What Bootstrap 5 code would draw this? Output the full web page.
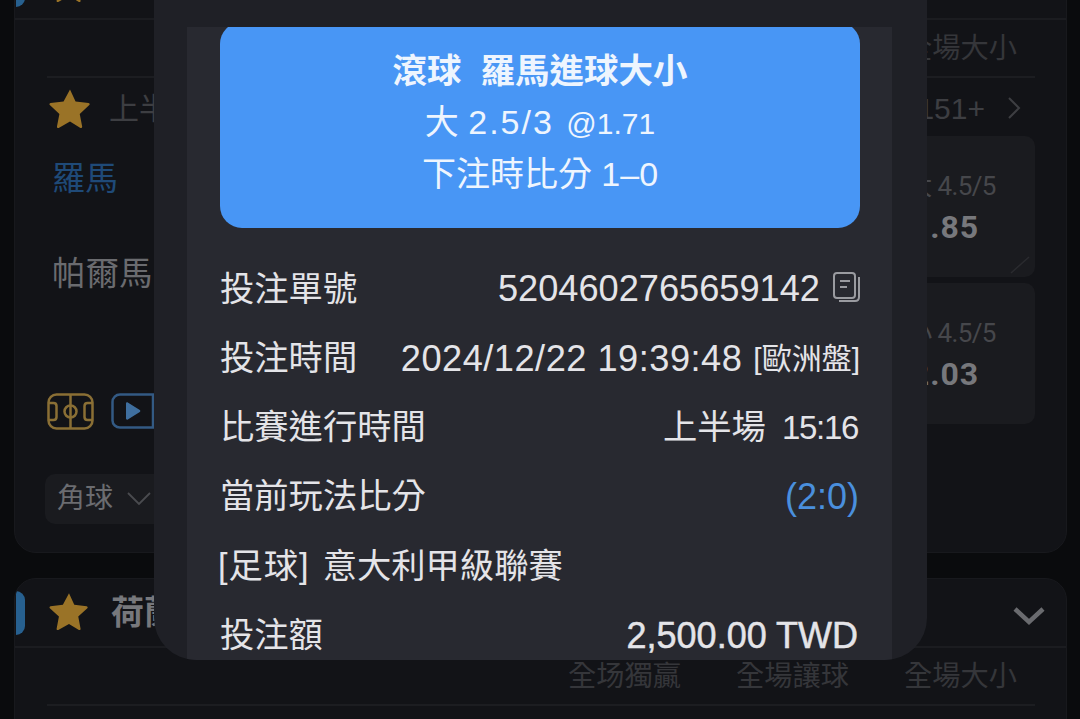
<!DOCTYPE html>
<html lang="zh-Hant">
<head>
  <meta charset="UTF-8">
  <title>投注詳情</title>
  <meta name="viewport" content="width=device-width, initial-scale=1">
  <link href="https://cdn.jsdelivr.net/npm/bootstrap@5.3.3/dist/css/bootstrap.min.css" rel="stylesheet">
  <style>
    html, body { height: 100%; }
    body { background: #0a0b0d; font-family: "Liberation Sans", "Noto Sans CJK TC", sans-serif; overflow: hidden; }
    .screen { width: 1080px; height: 719px; overflow: hidden; padding: 0 13px 0 14px; }
    .match-box { background: #121317; border: 1px solid #18191d; border-radius: 22px; overflow: hidden; }
    .match-one { height: 603px; margin-top: -50px; margin-bottom: 25px; }
    .match-two { height: 200px; }
    .match-head { height: 69px; border-bottom: 2px solid #1b1c20; padding-right: 20px; }
    .side-tab { width: 9px; height: 44px; background: #27608f; border-radius: 0 10px 10px 0; margin-right: 24px; margin-left: 1px; }
    .head-star { margin-top: -4px; }
    .head-name { font-size: 33px; font-weight: 700; color: #77787c; margin-left: 22px; }
    .head-chevron { margin-top: 7px; margin-right: 1px; }
    .market-labels { height: 58px; margin: 0 31px 0 32px; border-bottom: 2px solid #1c1d21; color: #35363a; font-size: 28.25px; padding-right: 18px; gap: 55px; }
    .match-body { padding: 0 31px 0 30px; }
    .period-row { height: 60px; color: #3d3e42; font-size: 30px; }
    .period-row .star-icon { margin-right: 18px; }
    .period-arrow { margin: 0 14px 0 22px; }
    .team-away { color: #1f4a78; font-size: 33px; margin: 21px 0 0 7px; line-height: 1.2; }
    .team-home { color: #6a6b6f; font-size: 33.5px; margin: 55px 0 0 7px; line-height: 1.2; }
    .odds-col { width: 180px; gap: 6px; margin-top: -2px; }
    .odds-box { height: 141px; background: #1a1b1f; border-radius: 10px; position: relative; padding-top: 18px; }
    .odds-line { color: #46474b; font-size: 26px; font-family: "Roboto", "Noto Sans CJK TC", sans-serif; letter-spacing: -.6px; line-height: 1.2; margin-left: 12px; margin-top: -7px; }
    .odds-num { color: #77787c; font-size: 32px; font-weight: 700; font-family: "Roboto", sans-serif; letter-spacing: 1px; line-height: 1.6; }
    .odds-corner { position: absolute; right: 5px; bottom: 3px; }
    .left-side { width: 145px; }
    .icon-row { margin: 99px 0 0 2px; gap: 17px; }
    .drop-pill { width: 160px; height: 50px; margin-top: 44px; background: #1a1b1f; border-radius: 10px; color: #6b6c70; font-size: 28px; padding-left: 12px; gap: 14px; }
    .sheet { position: absolute; left: 154px; top: -20px; width: 773px; height: 680px; background: #1f2026; border-radius: 0 0 42px 42px; overflow: hidden; padding: 47px 35px 0 33px; }
    .sheet-inner { height: 100%; background: #282930; overflow: hidden; padding: 0 32px 0 33px; }
    .bet-card { height: 206px; margin-top: -5px; margin-bottom: 27px; background: #4896f5; border-radius: 22px; color: #eef5fe; font-size: 34px; line-height: 51px; padding-top: 24px; }
    .bet-title { font-weight: 700; font-size: 34.5px; }
    .bet-stake { letter-spacing: 2px; }
    .bet-price { font-size: 30px; margin-left: 3px; }
    .bet-row { height: 69.2px; color: #e4e4e8; font-size: 34.3px; white-space: nowrap; }
    .bet-num { font-size: 36.2px; }
    .bet-date { font-size: 36.2px; letter-spacing: .5px; }
    .bet-tag { font-size: 30px; margin-left: 3px; }
    .bet-clock { font-size: 33px; letter-spacing: -1.3px; margin-left: 16px; }
    .bet-blue { color: #4a8fdd; font-size: 36px; padding-right: 1px; }
    .bet-amount { font-size: 36px; -webkit-text-stroke: .5px #e4e4e8; }
    .bet-end { padding-right: 2px; }
    .bet-bracket { letter-spacing: 1px; margin: 0 13px 0 -2px; }
    .copy-icon { margin-left: 13px; margin-top: -6px; }
  </style>
</head>
<body>
  <div class="screen position-relative">

    <div class="match-box match-one">
      <div class="match-head d-flex align-items-center">
        <span class="side-tab"></span>
        <svg class="head-star" width="40" height="38" viewBox="0 0 24 23"><path fill="#9a7327" d="M12 .8l3.200 6.900 7.500.9c.6.100.8.8.4 1.200l-5.500 5.100 1.400 7.300c.1.600-.5 1-1 .8L12 19.300 5.500 23c-.5.300-1.100-.2-1-.8l1.400-7.300L.4 9.800C0 9.400.2 8.700.8 8.600l7.500-.9z"/></svg>
        <span class="head-name fw-normal">意</span>
      </div>
      <div class="market-labels d-flex align-items-center justify-content-end">
        <span>全場大小</span>
      </div>
      <div class="match-body">
        <div class="period-row d-flex align-items-center">
          <svg class="star-icon ms-1" width="42" height="40" viewBox="0 0 24 23"><path fill="#9a7327" d="M12 .8l3.200 6.900 7.500.9c.6.100.8.8.4 1.200l-5.500 5.100 1.400 7.300c.1.600-.5 1-1 .8L12 19.300 5.500 23c-.5.300-1.100-.2-1-.8l1.400-7.300L.4 9.800C0 9.400.2 8.700.8 8.600l7.500-.9z"/></svg>
          <span>上半場</span>
          <span class="ms-auto">151+</span>
          <svg class="period-arrow" width="14" height="24" viewBox="0 0 14 24"><path fill="none" stroke="#3d3e42" stroke-width="2" d="M2 2l10 10L2 22"/></svg>
        </div>
        <div class="d-flex justify-content-between">
          <div class="left-side">
            <div class="team-away">羅馬</div>
            <div class="team-home text-nowrap">帕爾馬</div>
            <div class="icon-row d-flex align-items-center">
              <svg width="47" height="37" viewBox="0 0 47 37" fill="none" stroke="#8a6f35" stroke-width="2.500">
                <rect x="1.500" y="1.500" width="44" height="34" rx="8"/>
                <path d="M23.500 1.500v34"/>
                <circle cx="23.500" cy="18.500" r="6"/>
                <path d="M1.500 10h5c2 0 3 1 3 3v11c0 2-1 3-3 3h-5M45.500 10h-5c-2 0-3 1-3 3v11c0 2 1 3 3 3h5"/>
              </svg>
              <svg width="44" height="36" viewBox="0 0 44 36" fill="none">
                <path stroke="#335a84" stroke-width="2.500" d="M9 1.500h33v33H9c-4 0-7.500-3-7.500-7V9C1.500 4.500 5 1.500 9 1.500z"/>
                <path fill="#3f6f9f" d="M15 10.500c0-1 1-1.500 1.800-1l12 7.500c.7.500.7 1.500 0 2l-12 7.500c-.8.500-1.800 0-1.800-1z"/>
              </svg>
            </div>
            <div class="drop-pill d-flex align-items-center">
              <span>角球</span>
              <svg width="24" height="14" viewBox="0 0 24 14"><path fill="none" stroke="#4a4b4f" stroke-width="1.800" d="M1 1l11 11L23 1"/></svg>
            </div>
          </div>
          <div class="odds-col d-flex flex-column">
            <div class="odds-box d-flex flex-column align-items-center justify-content-center text-center">
              <div class="odds-line">大 4.5/5</div>
              <div class="odds-num">1.85</div>
              <svg class="odds-corner" width="20" height="18" viewBox="0 0 20 18"><path stroke="#2a2b2f" stroke-width="1.500" d="M1 17L19 1"/></svg>
            </div>
            <div class="odds-box d-flex flex-column align-items-center justify-content-center text-center">
              <div class="odds-line">小 4.5/5</div>
              <div class="odds-num">2.03</div>
            </div>
          </div>
        </div>
      </div>
    </div>

    <div class="match-box match-two">
      <div class="match-head d-flex align-items-center">
        <span class="side-tab"></span>
        <svg class="head-star" width="40" height="38" viewBox="0 0 24 23"><path fill="#9a7327" d="M12 .8l3.200 6.900 7.500.9c.6.100.8.8.4 1.200l-5.500 5.100 1.400 7.300c.1.600-.5 1-1 .8L12 19.300 5.500 23c-.5.300-1.100-.2-1-.8l1.400-7.300L.4 9.800C0 9.400.2 8.700.8 8.600l7.500-.9z"/></svg>
        <span class="head-name">荷蘭</span>
        <svg class="head-chevron ms-auto" width="32" height="20" viewBox="0 0 32 20"><path fill="none" stroke="#6a6b6f" stroke-width="4.500" d="M2 3l14 13L30 3"/></svg>
      </div>
      <div class="market-labels d-flex align-items-center justify-content-end">
        <span>全场獨贏</span>
        <span>全場讓球</span>
        <span>全場大小</span>
      </div>
    </div>

    <div class="sheet">
      <div class="sheet-inner">
        <div class="bet-card text-center">
          <div class="bet-title">滾球&nbsp;&nbsp;羅馬進球大小</div>
          <div>大 <span class="bet-stake">2.5/3</span> <span class="bet-price">@1.71</span></div>
          <div>下注時比分 1–0</div>
        </div>
        <div class="bet-row d-flex align-items-center justify-content-between">
          <span>投注單號</span>
          <span class="d-flex align-items-center">
            <span class="bet-num">5204602765659142</span>
            <svg class="copy-icon" width="27" height="30" viewBox="0 0 27 30" fill="none" stroke="#9a9ba0" stroke-width="2">
              <rect x="1" y="1" width="21" height="25" rx="3"/>
              <path d="M7 9h10M7 15h7M26 5v20c0 2-1 4-4 4H6"/>
            </svg>
          </span>
        </div>
        <div class="bet-row d-flex align-items-center justify-content-between">
          <span>投注時間</span>
          <span class="d-flex align-items-center gap-2">
            <span class="bet-date">2024/12/22 19:39:48</span>
            <span class="bet-tag">[歐洲盤]</span>
          </span>
        </div>
        <div class="bet-row d-flex align-items-center justify-content-between">
          <span>比賽進行時間</span>
          <span class="bet-end d-flex align-items-center">上半場<span class="bet-clock">15:16</span></span>
        </div>
        <div class="bet-row d-flex align-items-center justify-content-between">
          <span>當前玩法比分</span>
          <span class="bet-blue">(2:0)</span>
        </div>
        <div class="bet-row d-flex align-items-center">
          <span class="bet-bracket">[足球]</span><span>意大利甲級聯賽</span>
        </div>
        <div class="bet-row d-flex align-items-center justify-content-between">
          <span>投注額</span>
          <span class="bet-amount bet-end">2,500.00 TWD</span>
        </div>
      </div>
    </div>

  </div>
  <script src="https://cdn.jsdelivr.net/npm/bootstrap@5.3.3/dist/js/bootstrap.bundle.min.js"></script>
</body>
</html>
